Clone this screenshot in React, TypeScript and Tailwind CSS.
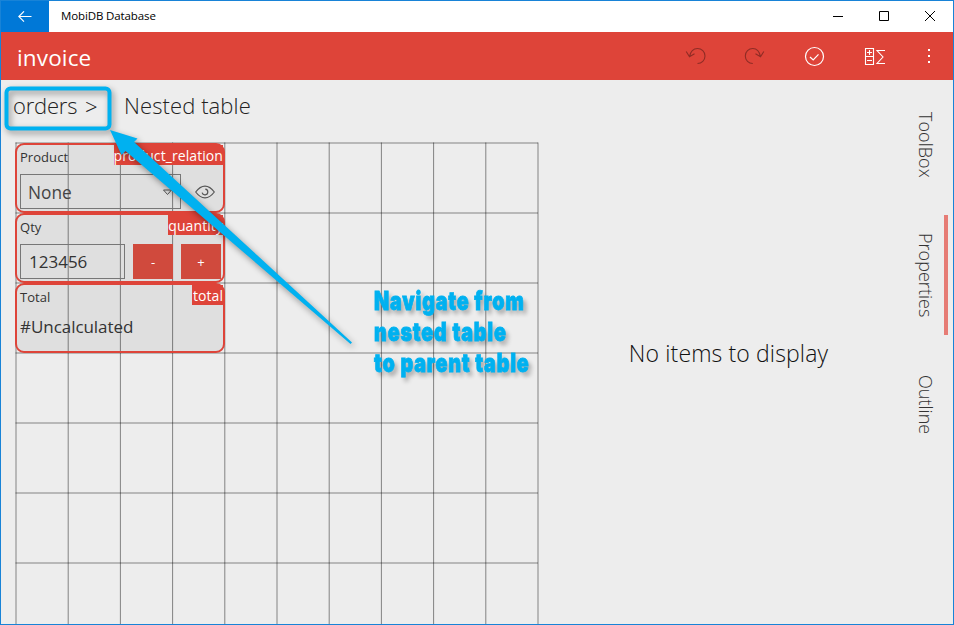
import type { ReactNode } from "react";

const columns = Array.from({ length: 11 }, (_, i) => 1 + i * 52.2);
const rows = Array.from({ length: 7 }, (_, i) => 1 + i * 70);

function CanvasGrid() {
  return (
    <svg className="absolute left-0 top-0" width="524" height="482" viewBox="0 0 524 482" stroke="#000" strokeOpacity="0.45">
      {columns.map((x) => (
        <line key={x} x1={x} x2={x} y1="0.5" y2="482" />
      ))}
      {rows.map((y) => (
        <line key={y} x1="0.5" x2="523" y1={y} y2={y} />
      ))}
    </svg>
  );
}

function Field({ label, name, children }: { label: string; name: ReactNode; children: ReactNode }) {
  return (
    <div className="relative h-[70px] w-[210px] rounded-[9px] border-2 border-[#de4439] bg-black/6 pl-[3px] pt-[3px]">
      <div className="h-[26px] text-[13px] leading-[19px] tracking-[0.05px] text-[#333]">{label}</div>
      <div className="absolute right-0 top-0 flex h-[20px] items-center bg-[#de4439] text-[14px] tracking-[0.08px] text-white">
        {name}
      </div>
      {children}
    </div>
  );
}

function Tab({ label, active = false }: { label: ReactNode; active?: boolean }) {
  return (
    <div className="flex h-[120px] w-[34px] justify-between">
      <div className="flex w-[22px] items-center justify-center [writing-mode:vertical-rl]">{label}</div>
      <div className={active ? "w-1 bg-[#e67c75]" : "w-1"} />
    </div>
  );
}

function Toolbar() {
  return (
    <header className="flex h-[48px] items-center bg-[#de4439] pl-4 text-white">
      <h1 className="flex-1 pt-[3px] text-[22.5px] leading-[46px] tracking-[0.15px]">invoice</h1>
      <svg width="270" height="48" viewBox="683 32 270 48" fill="none" strokeWidth="1.1">
        <g stroke="#8f2c25">
          <path d="M686.2 51.5 689.5 56.7 694.5 53.8M689.5 56.7C690.5 51.5 693.5 48.5 697.5 48.5a7.5 7.5 0 0 1 0 15" />
          <path d="M763.8 51.5 760.5 56.7 755.5 53.8M760.5 56.7C759.5 51.5 756.5 48.5 752.8 48.5a7.5 7.5 0 0 0 0 15" />
        </g>
        <g stroke="#fff">
          <circle cx="814.5" cy="56.5" r="9" strokeWidth="1.2" />
          <path d="m810 57 3.2 3 5.3-5.7" strokeWidth="1.2" />
          <path d="M865.5 48.5h8v16h-8zM865.5 56.5h8M867 52.5h5M869.5 50v5M867 60.5h5" />
          <path d="M885 50.5h-8l6 6.5-6 6.5h8" />
        </g>
        <path fill="#fff" d="M928 49h2v2h-2zM928 55h2v2h-2zM928 61h2v2h-2z" />
      </svg>
    </header>
  );
}

function TitleBar() {
  return (
    <div className="flex h-[31px] items-center bg-white">
      <div className="flex h-[31px] w-[48px] items-center justify-center bg-[#0078d7]">
        <svg width="14" height="12" viewBox="0 0 14 12" fill="none" stroke="#fff" strokeWidth="1.1">
          <path d="M13.5 5.5H1M6 .3.8 5.5 6 10.7" />
        </svg>
      </div>
      <div className="flex-1 pb-px pl-3 text-[11.5px] tracking-[-0.12px] text-black">MobiDB Database</div>
      <svg width="122" height="31" viewBox="831 1 122 31" fill="none" stroke="#000">
        <path d="M833 16.5h10M879.5 11.5h9v9h-9zM925 11l10 10M935 11l-10 10" />
      </svg>
    </div>
  );
}

function Annotation() {
  return (
    <div className="pointer-events-none absolute left-0 top-0">
      <svg className="absolute left-0 top-0 drop-shadow-[2px_3px_3px_rgba(0,0,0,0.4)]" width="360" height="350" viewBox="0 0 360 350">
        <rect x="6.5" y="88.5" width="103" height="40" rx="4" fill="none" stroke="#00b1f0" strokeWidth="4" />
        <path d="M110 130 137.5 138.5 134 142 352 342.5 350.5 344 125.5 151 121.5 155z" fill="#00b1f0" />
      </svg>
      <div className="absolute left-[373.5px] top-[284.5px] origin-left scale-x-[0.76] whitespace-nowrap font-['Inter'] text-[26px] font-black leading-[31px] tracking-[1.05px] text-[#00b1f0] [-webkit-text-stroke:0.8px_#00b1f0] [text-shadow:4px_4px_5px_rgba(0,0,0,0.3)]">
        <div>Navigate from</div>
        <div>nested table</div>
        <div>to parent table</div>
      </div>
    </div>
  );
}

export default function App() {
  return (
    <div className="relative flex h-[625px] w-[954px] flex-col overflow-hidden border border-[#1883d7] bg-[#ededed] font-['Open_Sans',sans-serif]">
      <TitleBar />
      <Toolbar />
      <div className="flex min-h-0 flex-1">
        <main className="w-[540px] pl-[14px]">
          <nav className="-ml-[2px] flex h-[62px] pt-[8px] text-[22px] font-light leading-[34px] tracking-[0.1px] text-[#222]">
            <span className="w-[72px] tracking-[-0.2px]">orders</span>
            <span className="w-[39px] pt-px text-[22px]">&gt;</span>
            <span>Nested table</span>
          </nav>
          <div className="relative h-[482px]">
            <CanvasGrid />
            <div className="relative flex w-[210px] flex-col pt-px">
              <Field label="Product" name="product_relation">
                <div className="flex items-center">
                  <div className="flex h-[35px] w-[161px] items-center justify-between border border-[#777] pl-[7px] pr-[7px] pt-[2px] text-[17.3px] text-[#444]">
                    None
                    <svg width="11" height="7" fill="none" stroke="#555"><path d="M1.5 1h8L5.5 5.5z" /></svg>
                  </div>
                  <svg className="ml-[14px]" width="20" height="14" fill="none" stroke="#555" strokeWidth="1.2">
                    <path d="M.7 7Q5 1.2 10 1.2T19.3 7Q15 12.8 10 12.8T.7 7zM10.3 4.1a2.9 2.9 0 1 1-3.2 3.6" />
                  </svg>
                </div>
              </Field>
              <Field label="Qty" name="quantity">
                <div className="flex gap-2 text-[#333]">
                  <div className="flex h-[35px] w-[105px] items-center border border-[#777] pl-[8px] text-[17px]">123456</div>
                  <div className="flex h-[35px] w-[40px] items-center justify-center bg-[#d04a3d] pt-[2px] text-[13px] text-white">-</div>
                  <div className="flex h-[35px] w-[40px] items-center justify-center bg-[#d04a3d] pt-[2px] text-[13px] text-white">+</div>
                </div>
              </Field>
              <Field label="Total" name={<span className="pl-px">total</span>}>
                <div className="text-[17px] leading-[25px] tracking-[-0.05px] text-[#333]">#Uncalculated</div>
              </Field>
            </div>
          </div>
        </main>
        <section className="flex flex-1 items-center justify-center pl-[2px] pt-[2px] text-[23px] font-light tracking-[0.12px] text-[#111]">
          No items to display
        </section>
        <aside className="mr-[5px] flex w-[34px] flex-col gap-[10px] pt-[5px] text-[18px] font-light tracking-[0.03px] text-[#333]">
          <Tab label="ToolBox" />
          <Tab label="Properties" active />
          <Tab label="Outline" />
        </aside>
      </div>
      <div className="absolute -left-px -top-px"><Annotation /></div>
    </div>
  );
}
